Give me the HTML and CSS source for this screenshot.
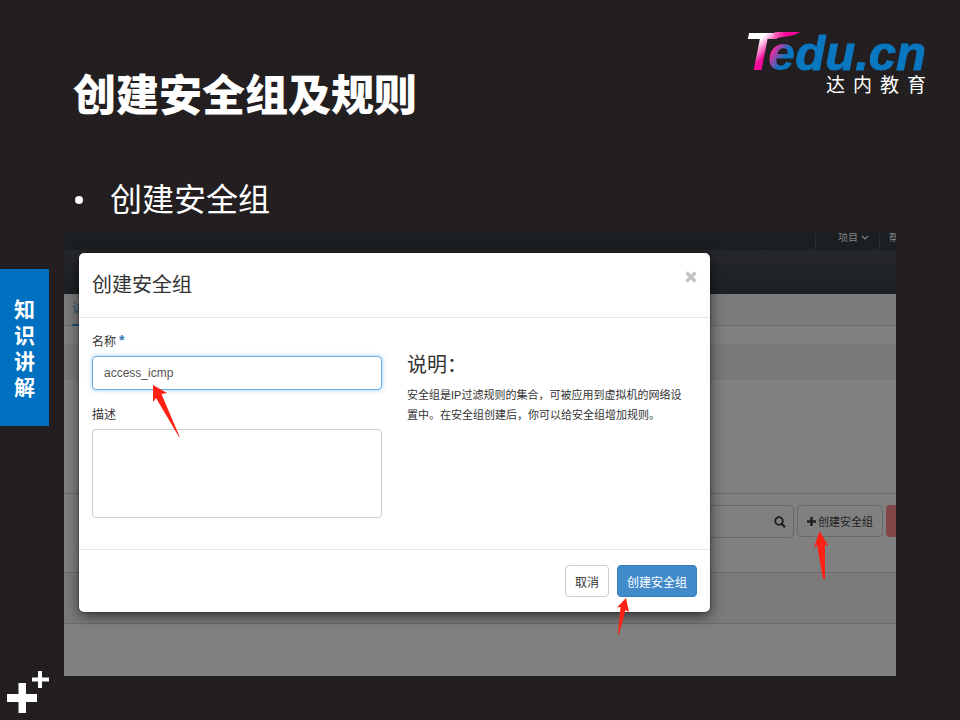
FILE: index.html
```html
<!DOCTYPE html>
<html lang="zh-CN">
<head>
<meta charset="utf-8">
<meta name="viewport" content="width=device-width, initial-scale=1">
<title>创建安全组及规则</title>
<link rel="stylesheet" href="styles.css">
</head>
<body>
<div class="slide">
  <aside class="rail">
    <div class="chapter"><span>知</span><span>识</span><span>讲</span><span>解</span></div>
    <svg class="pluses" viewBox="0 0 44 44" aria-hidden="true">
      <path fill="#fff" d="M11.500 13h7.500v11h11v8h-11v11h-7.500v-11h-11.500v-8h11.500zM31 1h4v6.500h7v4h-7v6.500h-4v-6.500h-6v-4h6z"/>
    </svg>
  </aside>

  <main class="main">
    <header class="head">
      <h1 class="title">创建安全组及规则</h1>
      <div class="logo">
        <div class="wordmark">
          <span class="mark-t">T</span><span class="mark-e">e</span><span class="mark-rest">du.cn</span>
          <svg class="swoosh" viewBox="0 0 28 10" aria-hidden="true"><defs><linearGradient id="sw"><stop offset="0" stop-color="#f76fbf"/><stop offset=".5" stop-color="#f5089a"/></linearGradient></defs><path fill="url(#sw)" d="M2 0H27C20 5 12 4 0 7z"/></svg>
        </div>
        <div class="tagline"><span>达</span><span>内</span><span>教</span><span>育</span></div>
      </div>
    </header>

    <ul class="points"><li>创建安全组</li></ul>

    <section class="console">
      <div class="page">
        <nav class="topbar">
          <a class="topitem" href="#">项目
            <svg class="chevron" viewBox="0 0 8 6" aria-hidden="true"><path d="M1 1l3 3 3-3" fill="none" stroke="currentColor" stroke-width="1.200"/></svg>
          </a>
          <a class="topitem" href="#">帮</a>
        </nav>
        <div class="brand"></div>
        <div class="tabs"><a class="tab" href="#">访</a></div>
        <div class="band"></div>
        <div class="toolbar">
          <div class="search">
            <input class="search-box" type="search" aria-label="搜索">
            <svg class="lens" viewBox="0 0 12 12" aria-hidden="true"><circle cx="5" cy="5" r="3.800" fill="none" stroke="currentColor" stroke-width="1.800"/><path d="M7.800 7.800l3.200 3.400" stroke="currentColor" stroke-width="2.200"/></svg>
          </div>
          <button class="tool" type="button">
            <svg class="add" viewBox="0 0 9 9" aria-hidden="true"><path fill="currentColor" d="M3.300 0h2.400v3.300h3.300v2.400h-3.300v3.300h-2.400v-3.300h-3.300v-2.400h3.300z"/></svg>创建安全组
            <svg class="arrow arrow-tool" viewBox="0 0 16 50" aria-hidden="true"><path d="M6.500 1L15.700 16.300 12 14.500 12 49H10L4 14.800.700 18.300z"/></svg>
          </button>
          <button class="danger" type="button" aria-label="删除"></button>
        </div>
        <div class="row"></div>
      </div>

      <form class="modal">
        <div class="modal-head">
          <h2>创建安全组</h2>
          <button class="close" type="button" aria-label="关闭"><svg viewBox="0 0 12 12" aria-hidden="true"><path d="M1.500 1.500l9 9M10.500 1.500l-9 9" stroke="currentColor" stroke-width="3.200"/></svg></button>
        </div>
        <div class="modal-body">
          <div class="fields">
            <label for="name">名称<span class="star">*</span></label>
            <div class="field">
              <input id="name" type="text" value="access_icmp">
              <svg class="arrow arrow-name" viewBox="0 0 28 54" aria-hidden="true"><path d="M1 1L15 9 9.500 10 27.700 53H27L4 14 1 18z"/></svg>
            </div>
            <label for="desc">描述</label>
            <textarea id="desc"></textarea>
          </div>
          <div class="help">
            <h2>说明：</h2>
            <p>安全组是IP过滤规则的集合，可被应用到虚拟机的网络设置中。在安全组创建后，你可以给安全组增加规则。</p>
          </div>
        </div>
        <div class="modal-foot">
          <button class="btn" type="button">取消</button>
          <button class="btn primary" type="button">创建安全组
            <svg class="arrow arrow-submit" viewBox="0 0 14 38" aria-hidden="true"><path d="M10 1L13 15 9.500 13 3 37.500H2L4.500 10 1 10.500z"/></svg>
          </button>
        </div>
      </form>
    </section>
  </main>
</div>
</body>
</html>
```
FILE: styles.css
```css
* { box-sizing: border-box; }

body {
  margin: 0;
  background: #231f20;
  color: #fff;
  font-family: "Liberation Sans", "Noto Sans CJK SC", sans-serif;
}

h1, h2, p, ul { margin: 0; }
a { color: inherit; text-decoration: none; }
button, input, textarea { font: inherit; }
svg { display: block; }

.slide {
  display: grid;
  grid-template-columns: 64px 1fr;
  min-height: 100vh;
}

/* Left rail */
.rail {
  display: flex;
  flex-direction: column;
  justify-content: space-between;
  align-items: flex-start;
  padding: 269px 0 6px;
}
.chapter {
  display: flex;
  flex-direction: column;
  align-items: center;
  width: 49px;
  padding: 28px 0 25px;
  background: #0070c0;
  font-size: 21px;
  font-weight: 700;
  line-height: 26px;
}
.pluses { width: 44px; height: 44px; margin-left: 7px; }

/* Heading area */
.main { padding: 28px 64px 44px 0; min-width: 0; }
.head {
  display: flex;
  justify-content: space-between;
  height: 142px;
  margin-right: -30px;
}
.title {
  padding: 36px 0 0 9px;
  font-size: 43px;
  font-weight: 900;
  line-height: 64px;
}
.logo { display: flex; flex-direction: column; align-items: flex-end; }
.wordmark {
  position: relative;
  display: flex;
  align-items: baseline;
  color: #0a77c1;
  font-size: 49px;
  font-style: italic;
  font-weight: 700;
  line-height: 46px;
}
.mark-t, .mark-e {
  color: transparent;
  -webkit-background-clip: text;
  background-clip: text;
}
.mark-t {
  margin-right: -9px;
  background-image: linear-gradient(135deg, #fff 35%, #f5089a 62%);
  font-size: 54px;
}
.mark-e { background-image: linear-gradient(120deg, #f5289c 30%, #0a77c1 60%); }
.mark-rest { -webkit-text-stroke: 1px #0a77c1; }
.swoosh { position: absolute; top: 4px; left: 29px; width: 28px; height: 10px; }
.tagline {
  display: flex;
  gap: 8px;
  font-size: 19px;
  line-height: 20px;
}

.points {
  display: flex;
  height: 63px;
  padding-left: 10px;
  list-style: none;
  font-size: 32px;
  line-height: 60px;
}
.points li { display: flex; }
.points li::before {
  content: "";
  width: 8px;
  height: 8px;
  margin: 26px 27px 0 1px;
  border-radius: 50%;
  background: #fff;
}

/* Dimmed console page */
.console {
  position: relative;
  overflow: hidden;
  color: #1e1e1e;
  font-size: 11px;
}
.page { height: 443px; background: #808080; }
.topbar {
  display: flex;
  justify-content: flex-end;
  height: 18px;
  border-bottom: 1px solid #25282b;
  background: #1b1f21;
  color: #858585;
  font-size: 10px;
  line-height: 10px;
}
.topitem {
  display: flex;
  gap: 3px;
  padding: 0 10px 0 22px;
  border-left: 1px solid #2b2e30;
}
.topitem:last-child { width: 17px; padding: 0 0 0 9px; overflow: hidden; }
.chevron { width: 8px; height: 6px; margin-top: 2px; }
.brand { height: 43px; background: linear-gradient(#26272b, #1c2123); }
.tabs {
  display: flex;
  height: 32px;
  padding-left: 8px;
  border-bottom: 1px solid #6c6c6c;
  background: #7b7b7b;
}
.tab {
  height: 32px;
  border-bottom: 2px solid #23506f;
  color: #23506f;
  font-size: 12px;
  line-height: 30px;
}
.band { height: 36px; margin: 18px 0 113px; background: #797979; }
.toolbar {
  display: flex;
  justify-content: flex-end;
  gap: 3px;
  height: 79px;
  padding-top: 11px;
  border-top: 1px solid #6b6b6b;
}
.search {
  display: flex;
  align-items: center;
  width: 240px;
  height: 33px;
  padding-right: 7px;
  border: 1px solid #686868;
  border-radius: 4px;
}
.search-box { flex: 1; min-width: 0; border: 0; outline: 0; background: transparent; }
.lens { width: 12px; height: 12px; }
.tool {
  position: relative;
  display: flex;
  align-items: center;
  gap: 2px;
  height: 32px;
  padding: 0 9px;
  border: 1px solid #6a6a6a;
  border-radius: 4px;
  background: transparent;
  color: #1e1e1e;
  white-space: nowrap;
}
.add { width: 9px; height: 9px; }
.danger {
  width: 10px;
  height: 32px;
  padding: 0;
  border: 0;
  border-radius: 4px 0 0 4px;
  background: #824646;
}
.row {
  height: 52px;
  border: solid #6b6b6b;
  border-width: 1px 0;
  background: #7b7b7b;
}

/* Dialog */
.modal {
  position: absolute;
  top: 20px;
  left: 15px;
  right: 186px;
  border-radius: 5px;
  background: #fff;
  box-shadow: 0 4px 14px rgba(0, 0, 0, .6), 0 0 2px rgba(0, 0, 0, .6);
  color: #333;
}
.modal h2 { font-size: 20px; font-weight: 400; line-height: 28px; }
.modal-head {
  display: flex;
  justify-content: space-between;
  padding: 18px 13px;
  border-bottom: 1px solid #e5e5e5;
}
.close {
  width: 12px;
  height: 12px;
  padding: 0;
  border: 0;
  background: none;
  color: #c4c4c4;
}
.modal-body {
  display: grid;
  grid-template-columns: 1fr 1fr;
  gap: 25px;
  padding: 16px 13px 31px;
}
.fields { display: flex; flex-direction: column; }
.fields label {
  display: flex;
  gap: 3px;
  margin-bottom: 6px;
  font-size: 12px;
  line-height: 16px;
}
.star { color: #337ab7; font-size: 14px; font-weight: 700; line-height: 12px; }
.field { position: relative; margin-bottom: 17px; }
.field input {
  display: block;
  width: 100%;
  height: 34px;
  padding: 0 11px;
  border: 1px solid #66afe9;
  border-radius: 4px;
  outline: 0;
  box-shadow: 0 0 5px rgba(102, 175, 233, .6);
  color: #555;
  font-size: 12px;
}
.fields textarea {
  height: 89px;
  border: 1px solid #ccc;
  border-radius: 4px;
  resize: none;
}
.help { padding-top: 17px; }
.help p { margin-top: 6px; padding-right: 8px; line-height: 20px; }
.modal-foot {
  display: flex;
  justify-content: flex-end;
  gap: 8px;
  padding: 15px 13px;
  border-top: 1px solid #e5e5e5;
}
.btn {
  position: relative;
  height: 32px;
  padding: 0 9px;
  border: 1px solid #ccc;
  border-radius: 4px;
  background: #fff;
  color: #333;
  font-size: 12px;
}
.primary { border-color: #357ebd; background: #428bca; color: #fff; }

/* Red pointers */
.arrow { position: absolute; z-index: 1; fill: #ff2114; }
.arrow-name { top: 28px; left: 60px; width: 28px; height: 54px; }
.arrow-tool { top: 24px; left: 15px; width: 16px; height: 50px; }
.arrow-submit { top: 31px; left: -2px; width: 14px; height: 38px; }
```
